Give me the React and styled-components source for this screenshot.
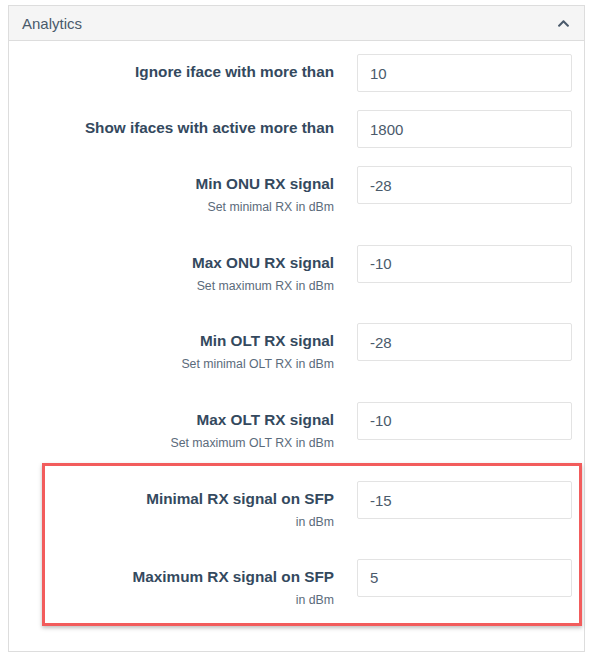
import React from 'react';
import styled, { createGlobalStyle } from 'styled-components';
import { FaChevronUp } from 'react-icons/fa';

const GlobalStyle = createGlobalStyle`
  body {
    margin: 0;
    background: #fff;
    font-family: "Liberation Sans", Arial, sans-serif;
  }
`;

const fields = [
  { label: 'Ignore iface with more than', value: '10' },
  { label: 'Show ifaces with active more than', value: '1800' },
  { label: 'Min ONU RX signal', help: 'Set minimal RX in dBm', value: '-28' },
  { label: 'Max ONU RX signal', help: 'Set maximum RX in dBm', value: '-10' },
  { label: 'Min OLT RX signal', help: 'Set minimal OLT RX in dBm', value: '-28' },
  { label: 'Max OLT RX signal', help: 'Set maximum OLT RX in dBm', value: '-10' },
];

const sfpFields = [
  { label: 'Minimal RX signal on SFP', help: 'in dBm', value: '-15' },
  { label: 'Maximum RX signal on SFP', help: 'in dBm', value: '5' },
];

function Field({ label, help, value }) {
  return (
    <Row>
      <LabelCell>
        <Label>{label}</Label>
        {help && <Help>{help}</Help>}
      </LabelCell>
      <Input defaultValue={value} />
    </Row>
  );
}

export default function App() {
  return (
    <>
      <GlobalStyle />
      <Page>
        <Panel>
          <Heading>
            <Title>Analytics</Title>
            <FaChevronUp size={13} />
          </Heading>
          <Body>
            {fields.map((f) => (
              <Field key={f.label} {...f} />
            ))}
            <Highlight>
              {sfpFields.map((f) => (
                <Field key={f.label} {...f} />
              ))}
            </Highlight>
          </Body>
        </Panel>
      </Page>
    </>
  );
}

const Page = styled.div`
  padding: 5px 12px 0 8px;
  width: 577px;
`;

const Panel = styled.section`
  border: 1px solid #dddddd;
  background: #fff;
`;

const Heading = styled.header`
  display: flex;
  align-items: center;
  justify-content: space-between;
  height: 34px;
  padding: 0 14px 0 13px;
  background: #f5f5f5;
  border-bottom: 1px solid #dddddd;
  color: #4a5a6b;
`;

const Title = styled.h3`
  margin: 0;
  font-size: 15px;
  font-weight: normal;
  color: #4a5a6b;
`;

const Body = styled.div`
  display: flex;
  flex-direction: column;
  padding: 13px 12px 25px 12px;
`;

const Row = styled.div`
  display: grid;
  grid-template-columns: 1fr 215px;
  column-gap: 23px;
  margin-bottom: 18px;

  &:last-child {
    margin-bottom: 0;
  }
`;

const LabelCell = styled.div`
  display: flex;
  flex-direction: column;
  align-items: flex-end;
  text-align: right;
  padding-top: 8px;
`;

const Label = styled.label`
  font-size: 15.3px;
  line-height: 20px;
  font-weight: bold;
  color: #34495e;
`;

const Help = styled.span`
  font-size: 12.3px;
  line-height: 16px;
  margin: 5px 0 11.6px;
  color: #5b6b7b;
`;

const Input = styled.input`
  box-sizing: border-box;
  height: 38px;
  width: 100%;
  padding: 0 12px;
  border: 1px solid #e3e3e3;
  border-radius: 2px;
  font-family: inherit;
  font-size: 15px;
  color: #4a5a6b;
  background: #fff;
  outline: none;
`;

const Highlight = styled.div`
  margin: -17px -10px 0 21px;
  padding: 15px 7px 3px 0;
  border: 3px solid #f25c5c;
  box-shadow: 0 2px 4px rgba(0, 0, 0, 0.25);

  & > div:first-child {
    margin-bottom: 17px;
  }
`;
